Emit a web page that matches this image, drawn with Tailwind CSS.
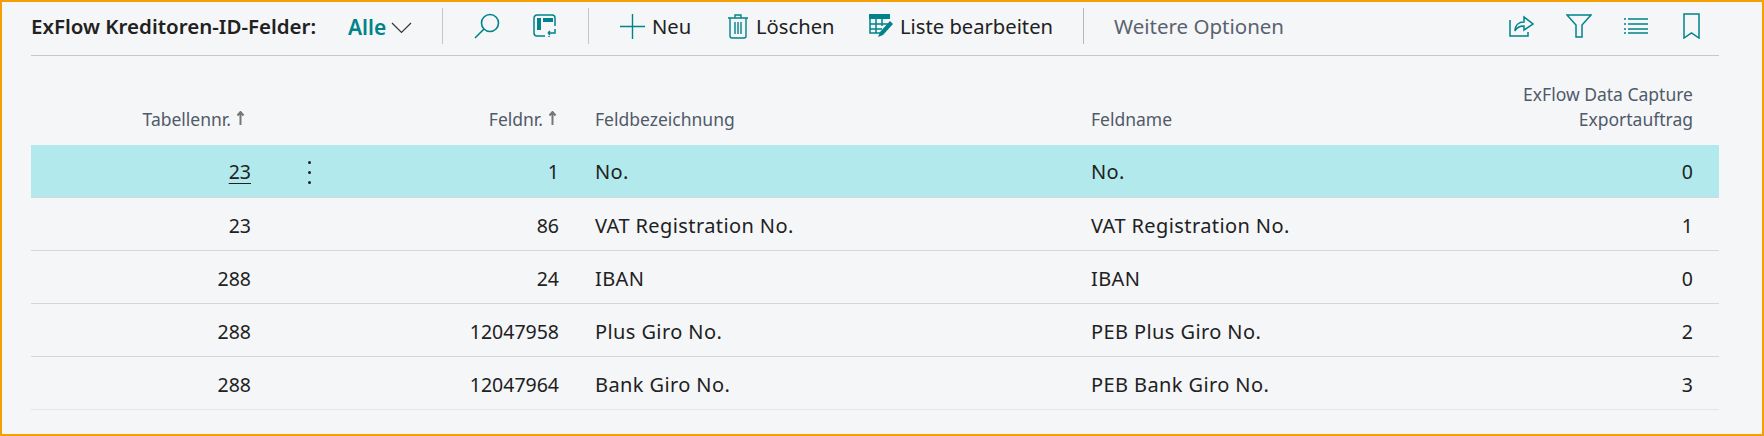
<!DOCTYPE html>
<html lang="de">
  <head>
    <meta charset="UTF-8" />
    <title>ExFlow Kreditoren-ID-Felder</title>
    <script src="https://cdn.jsdelivr.net/npm/@tailwindcss/browser@4"></script>
  </head>
  <body class="bg-[#f5f6f8]">
    <div class="h-[436px] w-[1764px] border-2 border-[#f5a000] bg-[#f5f6f8] pl-[29px] pr-[43px] font-['Noto_Sans','Open_Sans',sans-serif] text-[20px] text-[#212121]">
      <!-- toolbar -->
      <div class="flex h-[54px] items-center border-b border-[#c8c8c8] pb-[5px]">
        <span class="w-[317px] text-[20.500px] font-semibold whitespace-nowrap">ExFlow Kreditoren-ID-Felder:</span>
        <span class="w-[43px] pt-[3px] text-[21px] font-semibold text-[#00838a]">Alle</span>
        <svg class="mt-[3px] h-[12px] w-[21px]" viewBox="0 0 21 12" fill="none" stroke="#333" stroke-width="1.2"><path d="M1 1l9.500 9.500L20 1" /></svg>
        <div class="ml-[30px] h-[36px] w-px bg-[#c4c6cc]"></div>
        <svg class="ml-[31px] h-[26px] w-[26px]" viewBox="0 0 26 26" fill="none" stroke="#00838a" stroke-width="1.6"><circle cx="16" cy="10" r="8.500" /><path d="M10 16L1 25" /></svg>
        <svg class="ml-[33px] h-[25px] w-[24px]" viewBox="0 0 24 25" fill="none" stroke="#00838a" stroke-width="1.500"><path d="M22 12V4a3 3 0 0 0-3-3H4a3 3 0 0 0-3 3v15a3 3 0 0 0 3 3h8" /><rect x="4" y="4" width="4" height="12" fill="#00838a" stroke="none" /><rect x="10" y="4" width="10" height="4" fill="#00838a" stroke="none" /><path d="M22 15v4h-7M15 19l2-2M15 19l2 2M16 23v-1" /></svg>
        <div class="ml-[31px] h-[36px] w-px bg-[#c4c6cc]"></div>
        <svg class="ml-[31px] h-[25px] w-[25px]" viewBox="0 0 25 25" fill="none" stroke="#00838a" stroke-width="1.400"><path d="M12.500 0v25M0 12.500h25" /></svg>
        <span class="ml-[7px] w-[76px] text-[20.200px]">Neu</span>
        <svg class="h-[25px] w-[20px]" viewBox="0 0 20 25" fill="none" stroke="#00838a" stroke-width="1.400"><path d="M0 4h20M7 4V1h6v3M2 4v18a2 2 0 0 0 2 2h12a2 2 0 0 0 2-2V4M7 8v12M10 8v12M13 8v12" /></svg>
        <span class="ml-[8px] w-[113px] text-[20.200px]">Löschen</span>
        <svg class="h-[24px] w-[25px]" viewBox="0 0 25 24"><path fill="#00838a" d="M0 0h21v5H0z" /><path fill="none" stroke="#00838a" stroke-width="1.500" d="M1 5v14h11M7 5v14M13 5v7M1 10h18M1 15h12" /><path fill="#00838a" d="M21 7l3 3-10 11-5 2 2-5z" /></svg>
        <span class="ml-[6px] w-[183px] text-[20.200px] whitespace-nowrap">Liste bearbeiten</span>
        <div class="h-[36px] w-px bg-[#b5b7c0]"></div>
        <span class="ml-[30px] text-[20.500px] text-[#5a6270]">Weitere Optionen</span>
        <svg class="ml-auto h-[24px] w-[25px]" viewBox="0 0 25 24" fill="none" stroke="#00838a" stroke-width="1.500"><path d="M1 6v16h18v-4M6 17c0-6 4-9 9-9V3l9 7-9 6v-4c-4 0-7 1-9 5z" /></svg>
        <svg class="ml-[32px] h-[24px] w-[26px]" viewBox="0 0 26 24" fill="none" stroke="#00838a" stroke-width="1.500"><path d="M1 1h24l-9 10v12h-6V11z" /></svg>
        <svg class="ml-[32px] h-[16px] w-[24px]" viewBox="0 0 24 16" fill="none" stroke="#00838a" stroke-width="1.600"><path d="M0 1h2M4 1h20M0 6h2M4 6h20M0 11h2M4 11h20M0 15h2M4 15h20" /></svg>
        <svg class="ml-[35px] mr-[19px] h-[26px] w-[17px]" viewBox="0 0 17 26" fill="none" stroke="#00838a" stroke-width="1.500"><path d="M1 1h15v24l-7.500-5L1 25z" /></svg>
      </div>

      <!-- header -->
      <div class="grid h-[89px] grid-cols-[243px_70px_235px_496px_1fr_220px] items-end pb-[13px] text-[17.500px] leading-[25px] text-[#505a68]">
        <div class="flex items-center justify-end gap-[5px] pr-[29px]">Tabellennr.<svg class="mb-[4px] h-[14px] w-[9px]" viewBox="0 0 9 14" fill="none" stroke="#777" stroke-width="2"><path d="M4.500 14V1M1.500 4.500L4.500 1 7.500 4.500" /></svg></div>
        <div></div>
        <div class="flex items-center justify-end gap-[5px] pr-[22px]">Feldnr.<svg class="mb-[4px] h-[14px] w-[9px]" viewBox="0 0 9 14" fill="none" stroke="#777" stroke-width="2"><path d="M4.500 14V1M1.500 4.500L4.500 1 7.500 4.500" /></svg></div>
        <div class="pl-[16px]">Feldbezeichnung</div>
        <div class="pl-[16px]">Feldname</div>
        <div class="pr-[26px] text-right whitespace-nowrap">ExFlow Data Capture<br />Exportauftrag</div>
      </div>

      <!-- rows -->
      <div class="grid h-[53px] grid-cols-[243px_70px_235px_496px_1fr_220px] items-center border-b border-[#d6d6d6] bg-[#b2e9ec] pt-[2px]">
        <div class="pr-[23px] text-right text-[19.500px] underline underline-offset-4">23</div>
        <div class="flex flex-col items-center gap-[7px]"><span class="size-[3px] rounded-full bg-[#212121]"></span><span class="size-[3px] rounded-full bg-[#212121]"></span><span class="size-[3px] rounded-full bg-[#212121]"></span></div>
        <div class="pr-[20px] text-right text-[19.500px]">1</div>
        <div class="pl-[16px] tracking-[0.4px]">No.</div>
        <div class="pl-[16px] tracking-[0.4px]">No.</div>
        <div class="pr-[26px] text-right text-[19.500px]">0</div>
      </div>
      <div class="grid h-[53px] grid-cols-[243px_70px_235px_496px_1fr_220px] items-center border-b border-[#d6d6d6] pt-[3px]">
        <div class="pr-[23px] text-right text-[19.500px]">23</div>
        <div></div>
        <div class="pr-[20px] text-right text-[19.500px]">86</div>
        <div class="pl-[16px] tracking-[0.4px]">VAT Registration No.</div>
        <div class="pl-[16px] tracking-[0.4px]">VAT Registration No.</div>
        <div class="pr-[26px] text-right text-[19.500px]">1</div>
      </div>
      <div class="grid h-[53px] grid-cols-[243px_70px_235px_496px_1fr_220px] items-center border-b border-[#d6d6d6] pt-[3px]">
        <div class="pr-[23px] text-right text-[19.500px]">288</div>
        <div></div>
        <div class="pr-[20px] text-right text-[19.500px]">24</div>
        <div class="pl-[16px] tracking-[0.4px]">IBAN</div>
        <div class="pl-[16px] tracking-[0.4px]">IBAN</div>
        <div class="pr-[26px] text-right text-[19.500px]">0</div>
      </div>
      <div class="grid h-[53px] grid-cols-[243px_70px_235px_496px_1fr_220px] items-center border-b border-[#d6d6d6] pt-[3px]">
        <div class="pr-[23px] text-right text-[19.500px]">288</div>
        <div></div>
        <div class="pr-[20px] text-right text-[19.500px]">12047958</div>
        <div class="pl-[16px] tracking-[0.4px]">Plus Giro No.</div>
        <div class="pl-[16px] tracking-[0.4px]">PEB Plus Giro No.</div>
        <div class="pr-[26px] text-right text-[19.500px]">2</div>
      </div>
      <div class="grid h-[53px] grid-cols-[243px_70px_235px_496px_1fr_220px] items-center border-b border-[#e4e5e7] pt-[3px]">
        <div class="pr-[23px] text-right text-[19.500px]">288</div>
        <div></div>
        <div class="pr-[20px] text-right text-[19.500px]">12047964</div>
        <div class="pl-[16px] tracking-[0.4px]">Bank Giro No.</div>
        <div class="pl-[16px] tracking-[0.4px]">PEB Bank Giro No.</div>
        <div class="pr-[26px] text-right text-[19.500px]">3</div>
      </div>
    </div>
  </body>
</html>
